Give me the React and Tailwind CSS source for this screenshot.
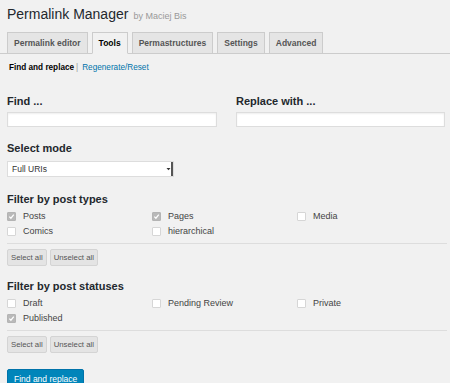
import React from 'react';

const Check = ({ checked, label }) => (
  <label className="flex h-[12px] items-center gap-[7px] text-[9px] leading-[12px] text-[#444]">
    <span
      className={
        'flex h-[9px] w-[9px] items-center justify-center rounded-[1px] border ' +
        (checked ? 'border-[#b4b4b4] bg-[#b9b9b9]' : 'border-[#d6d6d6] bg-white')
      }
    >
      {checked && (
        <svg width="7" height="7" viewBox="0 0 8 8">
          <path d="M1.5 4.2 L3.3 6 L6.6 1.8" fill="none" stroke="#fff" strokeWidth="1.4" />
        </svg>
      )}
    </span>
    {label}
  </label>
);

const SmallButtons = () => (
  <div className="flex gap-[3px]">
    <button className="h-[17px] rounded-[2px] border border-[#d4d4d4] bg-[#e4e4e4] px-[3px] text-[7.8px] leading-[15px] text-[#555]">
      Select all
    </button>
    <button className="h-[17px] rounded-[2px] border border-[#d4d4d4] bg-[#e4e4e4] px-[3px] text-[7.8px] leading-[15px] text-[#555]">
      Unselect all
    </button>
  </div>
);

const tabs = ['Permalink editor', 'Tools', 'Permastructures', 'Settings', 'Advanced'];

export default function App() {
  return (
    <div className="h-[383px] w-[450px] overflow-hidden bg-[#f1f1f1] text-[#23282d] [font-family:'Liberation_Sans',Arial,sans-serif]">
      <div className="px-[7px] pt-[4px]">
        <h1 className="flex h-[20px] items-baseline gap-[5px] text-[14px] leading-[20px]">
          Permalink Manager
          <span className="text-[9px] text-[#999]">by Maciej Bis</span>
        </h1>
      </div>

      <div className="mt-[8px] flex gap-[4px] border-b border-[#ccc] pl-[7px]">
        {tabs.map((t) => (
          <div
            key={t}
            className={
              'mb-[-1px] flex h-[22px] items-center border px-[6px] text-[8.5px] font-bold ' +
              (t === 'Tools'
                ? 'border-[#ccc] border-b-[#f1f1f1] bg-[#f1f1f1] text-black'
                : 'border-[#ccc] bg-[#e5e5e5] text-[#555]')
            }
          >
            {t}
          </div>
        ))}
      </div>

      <div className="pl-[7px] pr-[3px]">
        <div className="mt-[8px] flex h-[12px] items-center pl-[2px] text-[8.2px]">
          <span className="font-bold text-black">Find and replace</span>
          <span className="ml-[2px] text-[#999]">|</span>
          <span className="ml-[4px] text-[#0073aa]">Regenerate/Reset</span>
        </div>

        <div className="mt-[20px] grid grid-cols-[210px_209px] gap-[19px]">
          <div>
            <div className="text-[11px] font-bold leading-[14px]">Find ...</div>
            <div className="mt-[4px] h-[15px] border border-[#ddd] bg-white shadow-[inset_0_1px_2px_rgba(0,0,0,0.07)]" />
          </div>
          <div>
            <div className="text-[11px] font-bold leading-[14px]">Replace with ...</div>
            <div className="mt-[4px] h-[15px] border border-[#ddd] bg-white shadow-[inset_0_1px_2px_rgba(0,0,0,0.07)]" />
          </div>
        </div>

        <div className="mt-[14px] text-[11px] font-bold leading-[14px]">Select mode</div>
        <div className="mt-[6px] flex h-[16px] w-[167px] items-center justify-between border border-[#ddd] bg-white pl-[4px] text-[8.5px] text-[#333]">
          Full URIs
          <span className="flex h-full w-[7px] items-center justify-center border-r-2 border-[#555]">
            <svg width="5" height="4" viewBox="0 0 5 4">
              <path d="M0.5 1 L2.5 3.2 L4.5 1 Z" fill="#333" />
            </svg>
          </span>
        </div>

        <div className="mt-[15px] text-[11px] font-bold leading-[14px]">Filter by post types</div>
        <div className="mt-[4px] grid grid-cols-[145px_145px_145px] gap-y-[3px]">
          <Check checked label="Posts" />
          <Check checked label="Pages" />
          <Check label="Media" />
          <Check label="Comics" />
          <Check label="hierarchical" />
        </div>
        <div className="mt-[6px] border-t border-[#ddd]" />
        <div className="mt-[5px]">
          <SmallButtons />
        </div>

        <div className="mt-[13px] text-[11px] font-bold leading-[14px]">Filter by post statuses</div>
        <div className="mt-[4px] grid grid-cols-[145px_145px_145px] gap-y-[3px]">
          <Check label="Draft" />
          <Check label="Pending Review" />
          <Check label="Private" />
          <Check checked label="Published" />
        </div>
        <div className="mt-[6px] border-t border-[#ddd]" />
        <div className="mt-[5px]">
          <SmallButtons />
        </div>

        <button className="mt-[16px] h-[20px] rounded-[2px] border border-[#0073aa] bg-[#0085ba] px-[6px] text-[8.5px] leading-[18px] text-white">
          Find and replace
        </button>
      </div>
    </div>
  );
}
